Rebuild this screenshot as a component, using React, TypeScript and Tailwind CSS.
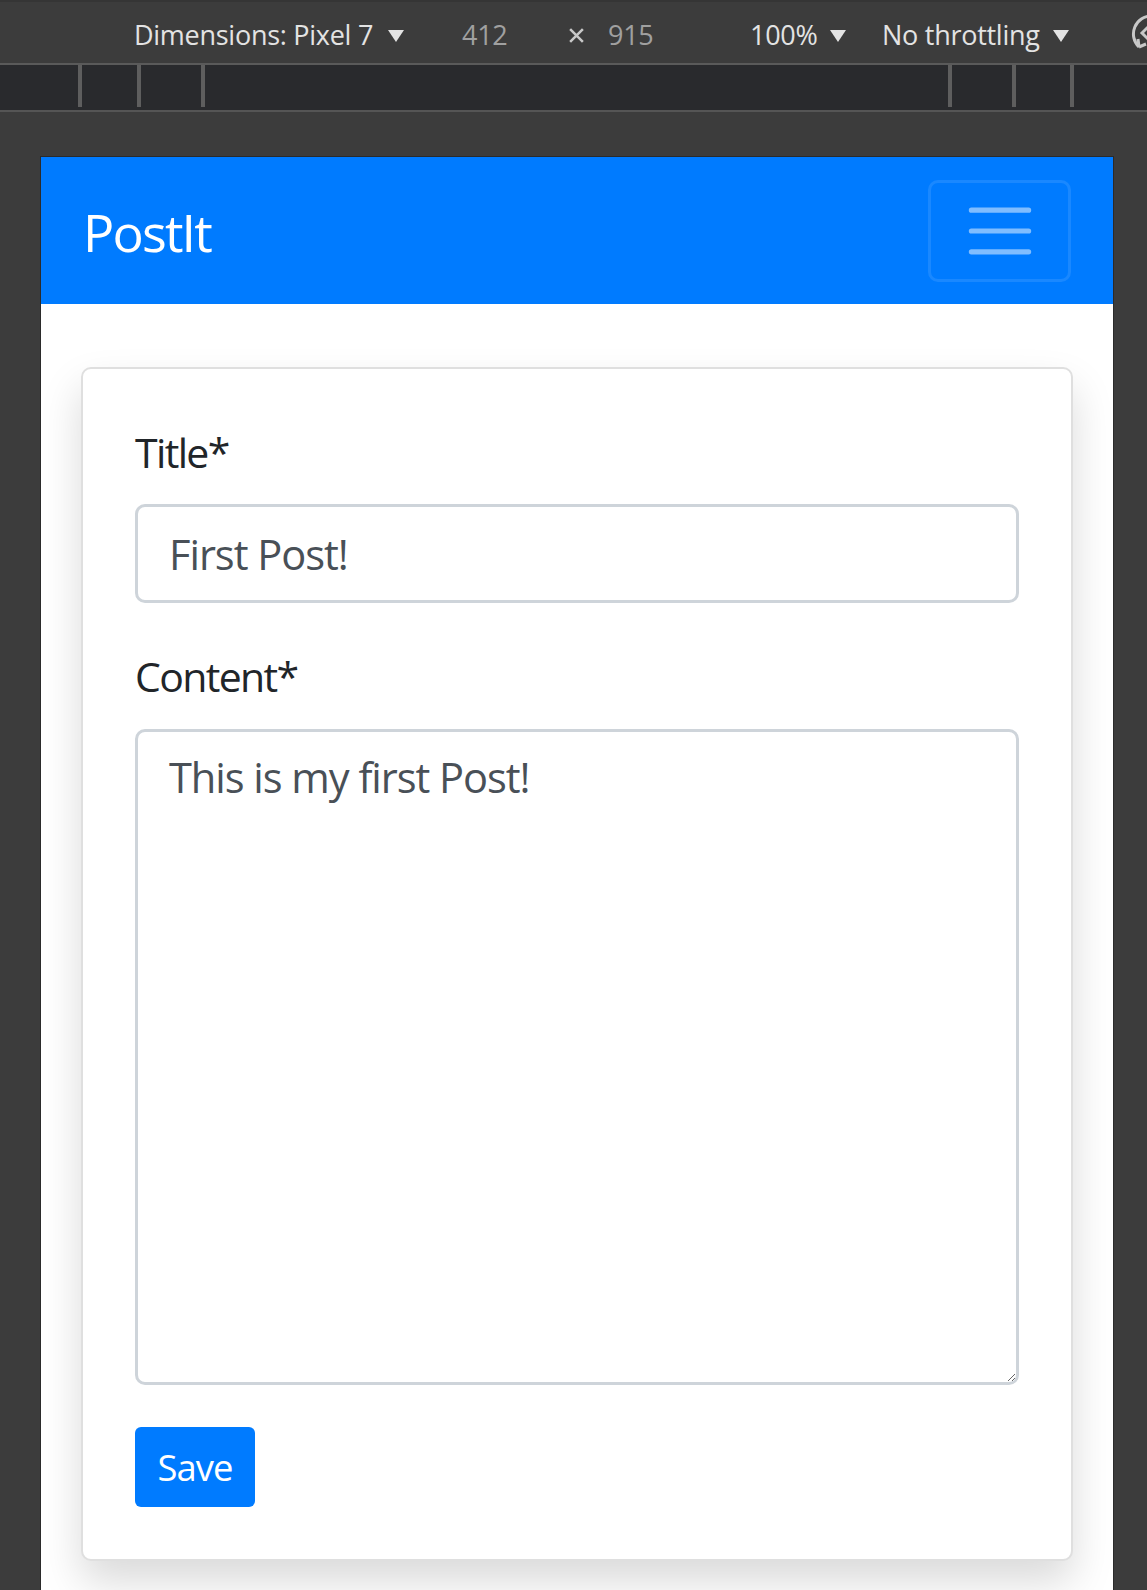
const Caret = () => (
  <svg width="16" height="12" viewBox="0 0 16 12" className="shrink-0">
    <path d="M0 0h16L8 12z" fill="#e3e3e3" />
  </svg>
);

const App = () => {
  return (
    <div className="h-[1590px] w-full overflow-hidden bg-[#3c3c3c] font-['Open_Sans','Noto_Sans',sans-serif]">
      {/* devtools toolbar */}
      <div className="flex h-[65px] items-center border-t-2 border-b-2 border-t-[#353535] border-b-[#5a5a5a] pt-[6px] text-[27px] tracking-[-0.01em] text-[#e3e3e3]">
        <div className="ml-[134px] flex w-[328px] shrink-0 items-center gap-[15px]">
          <span>Dimensions: Pixel 7</span>
          <Caret />
        </div>
        <span className="w-[106px] shrink-0 text-[#a0a0a0]">412</span>
        <span className="flex w-[40px] shrink-0 items-center">
          <svg width="17" height="17" viewBox="0 0 16 16">
            <path d="M2 2l12 12M14 2L2 14" stroke="#c8c8c8" strokeWidth="2.4" />
          </svg>
        </span>
        <span className="w-[142px] shrink-0 text-[#a0a0a0]">915</span>
        <div className="flex w-[132px] shrink-0 items-center gap-[12px]">
          <span>100%</span>
          <Caret />
        </div>
        <div className="flex w-[248px] shrink-0 items-center gap-[13px]">
          <span>No throttling</span>
          <Caret />
        </div>
        <svg width="44" height="44" viewBox="0 0 44 44" className="-mt-[6px] shrink-0">
          <path
            d="M22 5 A18 18 0 0 0 9 36"
            fill="none"
            stroke="#c8c8c8"
            strokeWidth="3"
          />
          <path d="M9 36 l-1 -8 M9 36 l7 -3" stroke="#c8c8c8" strokeWidth="3" fill="none" />
          <path
            d="M12 22 L22 12 L34 24 L24 34 Z"
            fill="none"
            stroke="#c8c8c8"
            strokeWidth="3"
          />
        </svg>
      </div>

      {/* ruler */}
      <div className="flex h-[47px] items-start border-b-2 border-[#555555] bg-[#292a2d]">
        <div className="ml-[78px] h-[42px] w-[4px] bg-[#5e5e5e]" />
        <div className="ml-[55px] h-[42px] w-[4px] bg-[#5e5e5e]" />
        <div className="ml-[60px] h-[42px] w-[4px] bg-[#5e5e5e]" />
        <div className="ml-[743px] h-[42px] w-[4px] bg-[#5e5e5e]" />
        <div className="ml-[60px] h-[42px] w-[4px] bg-[#5e5e5e]" />
        <div className="ml-[54px] h-[42px] w-[4px] bg-[#5e5e5e]" />
      </div>

      <div className="h-[44px]" />

      {/* emulated viewport */}
      <div className="ml-[40px] h-[1434px] w-[1074px] border border-b-0 border-[#2b2b2b] bg-white">
        <nav className="flex h-[147px] items-center justify-between bg-[#007bff] px-[42px]">
          <span className="pt-[3px] text-[52px] leading-[78px] tracking-[-0.035em] text-white">
            PostIt
          </span>
          <button className="flex h-[102px] w-[143px] items-center justify-center rounded-[10px] border-[3px] border-white/10">
            <svg width="78" height="78" viewBox="0 0 30 30">
              <path
                d="M4 7h22M4 15h22M4 23h22"
                stroke="rgba(255,255,255,0.5)"
                strokeWidth="2"
                strokeLinecap="round"
              />
            </svg>
          </button>
        </nav>

        <div className="px-[40px] pt-[63px]">
          <form className="rounded-[10px] border-2 border-[#dfdfdf] bg-white p-[52px] shadow-[0_21px_42px_rgba(0,0,0,0.15)]">
            <label className="mb-[21px] block text-[41px] leading-[62.4px] tracking-[-0.04em] text-[#212529]">
              Title*
            </label>
            <input
              type="text"
              defaultValue="First Post!"
              className="mb-[42px] block h-[99px] w-full rounded-[10px] border-[3px] border-[#ced4da] px-[31px] text-[41.6px] tracking-[-0.025em] text-[#495057] outline-none"
            />
            <label className="mb-[21px] block text-[41px] leading-[62.4px] tracking-[-0.04em] text-[#212529]">
              Content*
            </label>
            <textarea
              defaultValue="This is my first Post!"
              className="mb-[42px] block h-[656px] w-full rounded-[10px] border-[3px] border-[#ced4da] px-[31px] py-[14px] text-[41.6px] leading-[62.4px] tracking-[-0.025em] text-[#495057] outline-none"
            />
            <button
              type="button"
              className="h-[80px] w-[120px] rounded-[6px] bg-[#007bff] text-[36.4px] tracking-[-0.025em] text-white"
            >
              Save
            </button>
          </form>
        </div>
      </div>
    </div>
  );
};

export default App;
